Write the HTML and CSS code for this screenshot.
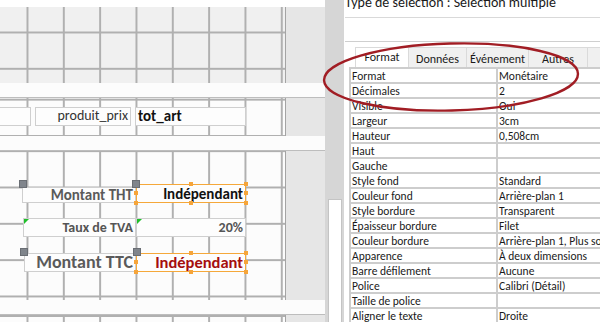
FILE: index.html
```html
<!DOCTYPE html>
<html lang="fr">
<head>
    <meta charset="UTF-8">
    <title>Sélection multiple</title>
    <link rel="stylesheet" href="styles.css">
</head>
<body>
    <div class="app">
        <!-- Report designer -->
        <div class="designer">
            <div class="top-strip"></div>

            <div class="band">
                <div class="grid grid-head"></div>
                <div class="outside"></div>
            </div>
            <div class="bar"></div>

            <div class="band">
                <div class="grid grid-page">
                    <div class="ctl box-left"></div>
                    <div class="ctl box-prix">produit_prix</div>
                    <div class="ctl box-tot">tot_art</div>
                </div>
                <div class="outside"></div>
            </div>
            <div class="bar"></div>

            <div class="band">
                <div class="grid grid-foot">
                    <span class="move" style="left:19px;top:29px"></span>
                    <span class="move" style="left:132px;top:29px"></span>
                    <div class="ctl lbl lbl-ht">Montant THT</div>
                    <div class="ctl sel val-ht">Indépendant
                        <i class="h tl"></i><i class="h tm"></i><i class="h tr"></i>
                        <i class="h ml"></i><i class="h mr"></i>
                        <i class="h bl"></i><i class="h bm"></i><i class="h br"></i>
                    </div>

                    <div class="ctl lbl lbl-tva"><b class="warn"></b>Taux de TVA</div>
                    <div class="ctl val-tva"><b class="warn"></b>20%</div>

                    <span class="move" style="left:20px;top:97px"></span>
                    <span class="move" style="left:133px;top:97px"></span>
                    <div class="ctl lbl lbl-ttc">Montant TTC</div>
                    <div class="ctl sel val-ttc">Indépendant
                        <i class="h tl"></i><i class="h tm"></i><i class="h tr"></i>
                        <i class="h ml"></i><i class="h mr"></i>
                        <i class="h bl"></i><i class="h bm"></i><i class="h br"></i>
                    </div>
                </div>
                <div class="outside"></div>
            </div>
            <div class="bar"></div>

            <div class="band">
                <div class="grid grid-end"></div>
                <div class="outside"></div>
            </div>
        </div>

        <div class="splitter">
            <div class="splitter-box"></div>
        </div>

        <!-- Property sheet -->
        <div class="props">
            <div class="props-title">Type de sélection : Sélection multiple</div>
            <div class="combo"></div>
            <div class="tabs">
                <div class="tab active" style="width:54px">Format</div>
                <div class="tab" style="width:58px">Données</div>
                <div class="tab" style="width:62px">Événement</div>
                <div class="tab" style="width:59px">Autres</div>
                <div class="tab" style="width:30px"></div>
            </div>
            <div class="sheet">
                <div>Format</div><div>Monétaire</div>
                <div>Décimales</div><div>2</div>
                <div>Visible</div><div>Oui</div>
                <div>Largeur</div><div>3cm</div>
                <div>Hauteur</div><div>0,508cm</div>
                <div>Haut</div><div></div>
                <div>Gauche</div><div></div>
                <div>Style fond</div><div>Standard</div>
                <div>Couleur fond</div><div>Arrière-plan 1</div>
                <div>Style bordure</div><div>Transparent</div>
                <div>Épaisseur bordure</div><div>Filet</div>
                <div>Couleur bordure</div><div>Arrière-plan 1, Plus som</div>
                <div>Apparence</div><div>À deux dimensions</div>
                <div>Barre défilement</div><div>Aucune</div>
                <div>Police</div><div>Calibri (Détail)</div>
                <div>Taille de police</div><div></div>
                <div>Aligner le texte</div><div>Droite</div>
            </div>
        </div>

        <svg class="mark" width="600" height="322" viewBox="0 0 600 322">
            <ellipse cx="451" cy="77" rx="127" ry="33.5" transform="rotate(-1.5 451 77)"
                fill="none" stroke="#a11d24" stroke-width="2.4"/>
        </svg>
    </div>
</body>
</html>
```

FILE: styles.css
```css
body {
    margin: 0;
    font-family: Carlito, Lato, "Open Sans", sans-serif;
    overflow: hidden;
}

.app {
    position: relative;
    display: flex;
    width: 600px;
    height: 322px;
    overflow: hidden;
    background-color: #fff;
}

/* ---------- designer ---------- */

.designer {
    width: 325px;
    flex: none;
    display: flex;
    flex-direction: column;
}

.top-strip {
    height: 7px;
    background-color: #fff;
    flex: none;
}

.band {
    display: flex;
    flex: none;
}

.grid {
    position: relative;
    width: 285px;
    border-right: 1px solid #a4a4a4;
    background-color: #fcfcfc;
    background-image:
        linear-gradient(to right, #b0b0b0 0, #b0b0b0 2px, transparent 2px),
        linear-gradient(to bottom, #b0b0b0 0, #b0b0b0 2px, transparent 2px);
    background-size: 36.33px 100%, 100% 36.33px;
    background-position: 26.5px 0, 0 var(--gy);
}

.outside {
    flex: 1;
    background-color: #e6e6e6;
}

.grid-head {
    height: 76px;
    background-color: #f0f0f0;
    --gy: 24.5px;
}

.grid-page {
    height: 38px;
    --gy: 37px;
}

.grid-foot {
    height: 149px;
    --gy: 35.5px;
}

.grid-end {
    height: 10px;
    --gy: 0px;
}

.bar {
    height: 14px;
    flex: none;
    background-color: #fcfcfc;
    border-bottom: 1px solid #bdbdbd;
}

/* controls placed on the design canvas */

.ctl {
    position: absolute;
    box-sizing: border-box;
    border: 1px solid #cfcfcf;
    background-color: #fdfdfd;
    text-align: right;
    white-space: nowrap;
    padding: 0 2px;
}

.box-left {
    left: -2px;
    top: 9px;
    width: 33px;
    height: 19px;
}

.box-prix {
    left: 35px;
    top: 9px;
    width: 96px;
    height: 19px;
    font-size: 14px;
    line-height: 16px;
    color: #333;
}

.box-tot {
    left: 135px;
    top: 9px;
    width: 111px;
    height: 19px;
    font-size: 15px;
    line-height: 17px;
    font-weight: bold;
    text-align: left;
    color: #111;
}

.lbl {
    color: #5a5a5a;
    font-weight: bold;
}

.lbl-ht {
    left: 22px;
    top: 36px;
    width: 114px;
    height: 16px;
    font-size: 15px;
    line-height: 15px;
}

.val-ht {
    left: 136px;
    top: 33px;
    width: 110px;
    height: 19px;
    font-size: 15px;
    line-height: 18px;
    font-weight: bold;
    color: #111;
}

.lbl-tva {
    left: 23px;
    top: 67px;
    width: 113px;
    height: 19px;
    font-size: 14px;
    line-height: 18px;
    color: #555;
}

.val-tva {
    left: 136px;
    top: 67px;
    width: 110px;
    height: 19px;
    font-size: 14px;
    line-height: 18px;
    font-weight: bold;
    color: #555;
}

.lbl-ttc {
    left: 24px;
    top: 102px;
    width: 112px;
    height: 19px;
    font-size: 18px;
    line-height: 17px;
}

.val-ttc {
    left: 136px;
    top: 102px;
    width: 110px;
    height: 19px;
    font-size: 16.5px;
    line-height: 17px;
    font-weight: bold;
    color: #a50e0e;
}

.sel {
    border-color: #f5a83a;
    background-color: #fdfdfd;
    padding-right: 2px;
}

.h {
    position: absolute;
    width: 4px;
    height: 4px;
    background-color: #f6a53a;
}

.tl { left: -3px; top: -3px; }
.tm { left: 52px; top: -3px; }
.tr { right: -3px; top: -3px; }
.ml { left: -3px; top: 6px; }
.mr { right: -3px; top: 6px; }
.bl { left: -3px; bottom: -3px; }
.bm { left: 52px; bottom: -3px; }
.br { right: -3px; bottom: -3px; }

.move {
    position: absolute;
    width: 6px;
    height: 6px;
    background-color: #80858c;
    border: 1px solid #6a6e74;
    z-index: 2;
}

.warn {
    position: absolute;
    left: 0;
    top: 0;
    width: 0;
    height: 0;
    border-top: 5px solid #1fbf2a;
    border-right: 5px solid transparent;
}

/* ---------- splitter ---------- */

.splitter {
    box-sizing: border-box;
    width: 19px;
    flex: none;
    background-color: #d6d6d6;
    display: flex;
    flex-direction: column;
    justify-content: flex-end;
    padding: 0 2px 0 3px;
}

.splitter-box {
    height: 122px;
    background-color: #fff;
    border: 1px solid #c4c4c4;
    border-bottom: none;
}

/* ---------- property sheet ---------- */

.props {
    flex: 1;
    min-width: 0;
    background-color: #fff;
    font-size: 11.5px;
    color: #1a1a1a;
}

.props-title {
    margin-top: -5px;
    height: 22px;
    padding-left: 1px;
    font-size: 14px;
    line-height: 16px;
    white-space: nowrap;
}

.combo {
    margin-left: 1px;
    height: 23px;
    border-top: 1px solid #d9d9d9;
    border-bottom: 1px solid #cfcfcf;
    background-color: #fff;
}

.tabs {
    display: flex;
    margin-top: 5px;
    padding-left: 11px;
    height: 20px;
    white-space: nowrap;
    font-size: 12px;
}

.tab {
    box-sizing: border-box;
    flex: none;
    height: 20px;
    padding-top: 4px;
    text-align: center;
    background-color: #f0f0f0;
    border: 1px solid #dadada;
    border-left: none;
    border-bottom: none;
}

.tab.active {
    background-color: #fff;
    border-left: 1px solid #dadada;
    padding-top: 2px;
}

.sheet {
    margin-left: 5px;
    display: grid;
    grid-template-columns: 147px 160px;
    border-top: 2px solid #cdcdcd;
    border-left: 2px solid #cdcdcd;
}

.sheet div {
    height: 13px;
    line-height: 14px;
    padding-left: 1px;
    white-space: nowrap;
    overflow: hidden;
    border-bottom: 2px solid #cdcdcd;
    border-right: 2px solid #cdcdcd;
}

.mark {
    position: absolute;
    left: 0;
    top: 0;
    pointer-events: none;
}
```
